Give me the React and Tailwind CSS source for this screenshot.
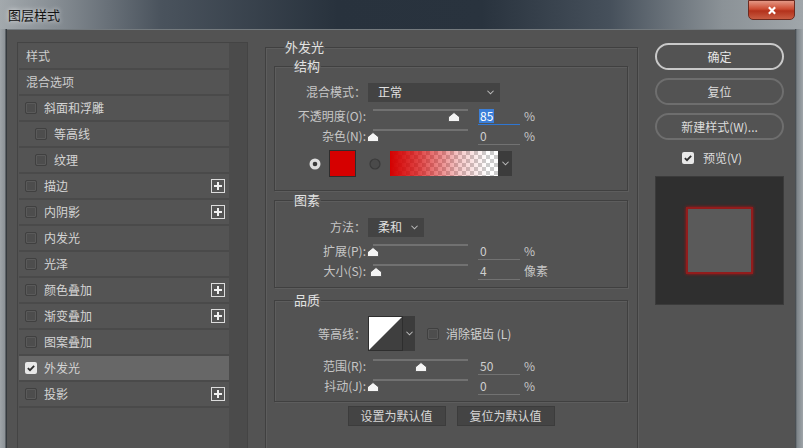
import React from "react";

const FONT = "font-['Noto_Sans_CJK_SC','Noto_Sans',sans-serif]";

const listItems = [
  { id: 1, label: "样式", box: false },
  { id: 2, label: "混合选项", box: false },
  { id: 3, label: "斜面和浮雕", box: true },
  { id: 4, label: "等高线", box: true, indent: true },
  { id: 5, label: "纹理", box: true, indent: true },
  { id: 6, label: "描边", box: true, plus: true },
  { id: 7, label: "内阴影", box: true, plus: true },
  { id: 8, label: "内发光", box: true },
  { id: 9, label: "光泽", box: true },
  { id: 10, label: "颜色叠加", box: true, plus: true },
  { id: 11, label: "渐变叠加", box: true, plus: true },
  { id: 12, label: "图案叠加", box: true },
  { id: 13, label: "外发光", box: true, checked: true },
  { id: 14, label: "投影", box: true, plus: true },
];

const CheckBox = ({ checked }) =>
  checked ? (
    <span className="w-[12px] h-[12px] bg-[#e8e8e8] rounded-[2px] flex items-center justify-center shrink-0">
      <svg viewBox="0 0 12 12" className="w-[10px] h-[10px]">
        <path d="M2.2 6.2 L4.8 8.6 L9.8 3.4" stroke="#2e2e2e" strokeWidth="2.2" fill="none" />
      </svg>
    </span>
  ) : (
    <span className="block w-[12px] h-[12px] border border-[#404040] bg-[#4d4d4d] rounded-[2px] shrink-0 shadow-[inset_0_0_0_1px_#5a5a5a]" />
  );

const PlusBox = () => (
  <span className="w-[14px] h-[14px] border border-[#dcdcdc] flex items-center justify-center">
    <svg viewBox="0 0 10 10" className="w-[10px] h-[10px]">
      <path d="M5 1 V9 M1 5 H9" stroke="#f0f0f0" strokeWidth="2" />
    </svg>
  </span>
);

const Chevron = () => (
  <svg viewBox="0 0 8 5" className="w-[7px] h-[5px]">
    <path d="M0.5 0.5 L4 4 L7.5 0.5" stroke="#bdbdbd" strokeWidth="1.2" fill="none" />
  </svg>
);

const Thumb = () => (
  <svg width="12" height="10" viewBox="0 0 12 10" className="block">
    <path d="M6 0.5 L11.5 5 L11.5 9.5 L0.5 9.5 L0.5 5 Z" fill="#f4f4f4" stroke="#4a4a4a" strokeWidth="0.8" />
  </svg>
);

const SliderRow = ({ label, pct, value, unit, active }) => (
  <div className="flex items-center h-[20px]">
    <span className="w-[91px] text-right text-[#c6c6c6] leading-[16px]">{label}</span>
    <div className="ml-[2px] relative w-[105px] h-[20px]">
      <div className="absolute left-[5px] right-[5px] top-[3px] h-[2px] bg-[#717171]" />
      <div className="absolute top-[6px]" style={{ left: `${(pct * 95) / 100 - 1}px` }}>
        <Thumb />
      </div>
    </div>
    <div
      className={
        "ml-[5px] w-[42px] h-[17px] border-b flex items-center pl-[1px] " +
        (active ? "border-[#2f76d2]" : "border-[#727272]")
      }
    >
      {active ? (
        <span className="bg-[#3b7fd9] text-white leading-[14px] px-[1px]">{value}</span>
      ) : (
        <span className="text-[#cfcfcf] leading-[14px] px-[1px]">{value}</span>
      )}
    </div>
    <span className="ml-[4px] text-[#c6c6c6]">{unit}</span>
  </div>
);

const Group = ({ title, children, className, legendClass }) => (
  <fieldset className={"border border-[#404040] shadow-[inset_1px_1px_0_#5d5d5d,1px_1px_0_#5d5d5d] " + (className || "")}>
    <legend className={"px-[1px] text-[13px] leading-[16px] text-[#e2e2e2] " + (legendClass || "ml-[18px]")}>
      {title}
    </legend>
    {children}
  </fieldset>
);

const Radio = ({ on }) => (
  <svg width="12" height="12" viewBox="0 0 12 12" className="block">
    {on ? (
      <>
        <circle cx="6" cy="6" r="5.5" fill="#dedede" />
        <circle cx="6" cy="6" r="2.3" fill="#3a3a3a" />
      </>
    ) : (
      <circle cx="6" cy="6" r="5" fill="#4a4a4a" stroke="#3a3a3a" strokeWidth="1.2" />
    )}
  </svg>
);

export default function App() {
  return (
    <div className={"w-[803px] h-[448px] overflow-hidden flex flex-col text-[12px] bg-[#8d9398] " + FONT}>
      {/* title bar */}
      <div className="h-[29px] shrink-0 flex justify-between bg-[linear-gradient(90deg,#a3a9ad_0%,#868d93_7%,#4a535d_20%,#28323d_42%,#29333e_60%,#46505b_76%,#8b9297_90%,#a0a6aa_100%)]">
        <span className="ml-[8px] mt-[6px] text-[13px] leading-[17px] text-[#141414] [text-shadow:0_0_5px_rgba(255,255,255,0.9)]">
          图层样式
        </span>
        <div className="mr-[8px] w-[47px] h-[20px] rounded-b-[5px] border border-[#6d2a1f] bg-[linear-gradient(#e49784,#cc4b31_45%,#b3321c_55%,#c85c42)] flex items-center justify-center">
          <svg viewBox="0 0 10 10" className="w-[10px] h-[9px]">
            <path d="M1.5 1.5 L8.5 8.5 M8.5 1.5 L1.5 8.5" stroke="#ffffff" strokeWidth="2.4" />
          </svg>
        </div>
      </div>

      <div className="flex flex-1 min-h-0">
        <div className="w-[7px] bg-[linear-gradient(90deg,#9fa5a9,#8c9297_70%,#353a3e_86%)]" />

        <div className="flex-1 bg-[#535353] border-t border-[#747a7e] flex items-start pl-[10px]">
          {/* left list */}
          <div className="mt-[12px] w-[231px] h-[420px] border border-[#444444] flex">
            <div className="w-[211px] pt-[1px] pl-[1px]">
              {listItems.map((item) => (
                <div
                  key={item.id}
                  className={
                    "h-[26px] flex items-center border-b-2 border-[#4a4a4a] pr-[4px] " +
                    (item.checked ? "bg-[#676767]" : "bg-[#545454]")
                  }
                >
                  {item.box ? (
                    <div className={"flex items-center " + (item.indent ? "pl-[16px]" : "pl-[6px]")}>
                      <CheckBox checked={item.checked} />
                      <span className="ml-[7px] text-[#d4d4d4]">{item.label}</span>
                    </div>
                  ) : (
                    <span className="pl-[7px] text-[#cdcdcd]">{item.label}</span>
                  )}
                  <div className="flex-1" />
                  {item.plus && <PlusBox />}
                </div>
              ))}
            </div>
            <div className="flex-1 bg-[#4b4b4b]" />
          </div>

          {/* middle */}
          <div className="ml-[17px] mt-[9px] w-[373px]">
            <Group title="外发光" className="h-[440px] px-[8px] pr-[9px]" legendClass="ml-[10px]">
              <Group title="结构" className="mt-[3px]">
                <div className="pt-[8px] pb-[13px]">
                  <div className="flex items-center h-[20px]">
                    <span className="w-[91px] text-right text-[#c6c6c6]">混合模式：</span>
                    <div className="ml-[2px] w-[132px] h-[19px] bg-[#434343] flex items-center justify-between pl-[10px] pr-[6px] text-[#e0e0e0]">
                      <span>正常</span>
                      <Chevron />
                    </div>
                  </div>
                  <div className="mt-[4px]">
                    <SliderRow label="不透明度(O):" pct={85} value="85" unit="%" active />
                    <SliderRow label="杂色(N):" pct={0} value="0" unit="%" />
                  </div>
                  <div className="mt-[4px] flex items-center h-[27px] pl-[34px]">
                    <Radio on />
                    <div className="ml-[8px] w-[27px] h-[27px] border border-[#2e2e2e] bg-[#d60000]" />
                    <div className="ml-[13px]">
                      <Radio />
                    </div>
                    <div className="ml-[9px] w-[108px] h-[25px] bg-[image:repeating-conic-gradient(#cdcdcd_0_25%,#ffffff_0_50%)] bg-[length:8px_8px]">
                      <div className="w-full h-full bg-[linear-gradient(90deg,#d40000_0%,rgba(212,0,0,0.75)_25%,rgba(212,0,0,0.2)_65%,rgba(212,0,0,0)_90%)]" />
                    </div>
                    <div className="w-[14px] h-[25px] bg-[#3c3c3c] flex items-center justify-center">
                      <Chevron />
                    </div>
                  </div>
                </div>
              </Group>

              <Group title="图素" className="mt-[1px]">
                <div className="pt-[9px] pb-[6px]">
                  <div className="flex items-center h-[20px]">
                    <span className="w-[91px] text-right text-[#c6c6c6]">方法：</span>
                    <div className="ml-[2px] w-[56px] h-[19px] bg-[#434343] flex items-center justify-between pl-[10px] pr-[6px] text-[#e0e0e0]">
                      <span>柔和</span>
                      <Chevron />
                    </div>
                  </div>
                  <div className="mt-[4px]">
                    <SliderRow label="扩展(P):" pct={0} value="0" unit="%" />
                    <SliderRow label="大小(S):" pct={3} value="4" unit="像素" />
                  </div>
                </div>
              </Group>

              <Group title="品质" className="mt-[4px]">
                <div className="pt-[8px] pb-[5px]">
                  <div className="flex items-center h-[35px]">
                    <span className="w-[91px] text-right text-[#c6c6c6]">等高线：</span>
                    <div className="ml-[2px] w-[35px] h-[35px] border border-[#2e2e2e]">
                      <svg viewBox="0 0 33 33" className="w-full h-full block">
                        <rect width="33" height="33" fill="#3f3f3f" />
                        <polygon points="0,0 33,0 0,33" fill="#ffffff" />
                      </svg>
                    </div>
                    <div className="w-[12px] h-[35px] bg-[#3c3c3c] flex items-center justify-center">
                      <Chevron />
                    </div>
                    <div className="ml-[12px]">
                      <CheckBox />
                    </div>
                    <span className="ml-[7px] text-[#d0d0d0]">消除锯齿 (L)</span>
                  </div>
                  <div className="mt-[5px]">
                    <SliderRow label="范围(R):" pct={50} value="50" unit="%" />
                    <SliderRow label="抖动(J):" pct={0} value="0" unit="%" />
                  </div>
                </div>
              </Group>

              <div className="mt-[4px] flex justify-center gap-[11px]">
                <div className="w-[98px] h-[20px] bg-[#444444] border border-[#3c3c3c] flex items-center justify-center text-[#d6d6d6]">
                  设置为默认值
                </div>
                <div className="w-[98px] h-[20px] bg-[#444444] border border-[#3c3c3c] flex items-center justify-center text-[#d6d6d6]">
                  复位为默认值
                </div>
              </div>
            </Group>
          </div>

          {/* right */}
          <div className="ml-[17px] mt-[13px] w-[129px] flex flex-col">
            <div className="h-[27px] rounded-full border-2 border-[#c9c9c9] flex items-center justify-center text-[#e6e6e6]">
              确定
            </div>
            <div className="mt-[8px] h-[27px] rounded-full border-2 border-[#6e6e6e] flex items-center justify-center text-[#dcdcdc]">
              复位
            </div>
            <div className="mt-[8px] h-[27px] rounded-full border-2 border-[#6e6e6e] flex items-center justify-center text-[#dcdcdc]">
              新建样式(W)...
            </div>
            <div className="mt-[11px] h-[14px] flex items-center pl-[27px]">
              <CheckBox checked />
              <span className="ml-[9px] text-[#dcdcdc]">预览(V)</span>
            </div>
            <div className="mt-[11px] w-[129px] h-[129px] bg-[#2f2f2f] border border-[#3b3b3b] flex items-center justify-center">
              <div className="w-[67px] h-[67px] bg-[#5a5a5a] border-2 border-[#921c1c] shadow-[0_0_3px_#b01010]" />
            </div>
          </div>
        </div>

        <div className="w-[8px] bg-[linear-gradient(90deg,#3a3f43,#7d8489_25%,#9ea4a8)]" />
      </div>
    </div>
  );
}
